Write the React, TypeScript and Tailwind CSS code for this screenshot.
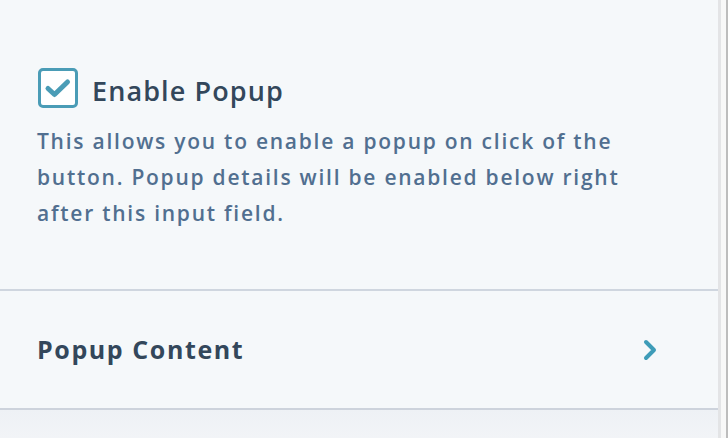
import React from "react";

export default function App() {
  return (
    <div
      className="w-[728px] h-[438px] overflow-hidden flex bg-[#f5f8fa]"
      style={{ fontFamily: '"Open Sans", "Noto Sans", sans-serif' }}
    >
      <div className="w-[718px] flex flex-col bg-[#f5f8fa]">
        <div className="h-[289px] pt-[68px] pl-[38px] pr-[40px]">
          <label className="flex items-center gap-[14px]">
            <span className="w-[40px] h-[40px] rounded-[5px] border-[3px] border-[#4a9cb6] bg-white flex items-center justify-center">
              <svg width="28" height="22" viewBox="0 0 28 22">
                <path
                  d="M4 11.5 L10.5 17.5 L23.5 5"
                  fill="none"
                  stroke="#4a9cb6"
                  strokeWidth="5"
                  strokeLinecap="round"
                  strokeLinejoin="round"
                />
              </svg>
            </span>
            <span className="pt-[5px] text-[27px] font-semibold tracking-[1.1px] text-[#33475b] leading-none">Enable Popup</span>
          </label>
          <p className="mt-[15px] ml-[-1px] text-[21px] tracking-[1.75px] leading-[36px] font-semibold text-[#516f90] whitespace-nowrap">
            This allows you to enable a popup on click of the
            <br />
            button. Popup details will be enabled below right
            <br />
            after this input field.
          </p>
        </div>
        <div className="h-[2px] bg-[#cfd6df]" />
        <div className="h-[117px] flex items-center justify-between pl-[37px] pr-[61px]">
          <span className="text-[25px] font-bold tracking-[1.6px] text-[#33475b]">Popup Content</span>
          <svg width="14" height="22" viewBox="0 0 14 22">
            <path
              d="M3 3 L11 11 L3 19"
              fill="none"
              stroke="#3e9cb8"
              strokeWidth="4"
              strokeLinecap="round"
              strokeLinejoin="round"
            />
          </svg>
        </div>
        <div className="h-[2px] bg-[#cdd3dc]" />
        <div className="flex-1 bg-gradient-to-b from-[#eef1f5] to-[#f2f4f7]" />
      </div>
      <div className="w-[3px] bg-[#e3e4e6]" />
      <div className="w-[5px] bg-[#f8f8f8]" />
      <div className="w-[2px] bg-[#bdbdbd]" />
    </div>
  );
}
